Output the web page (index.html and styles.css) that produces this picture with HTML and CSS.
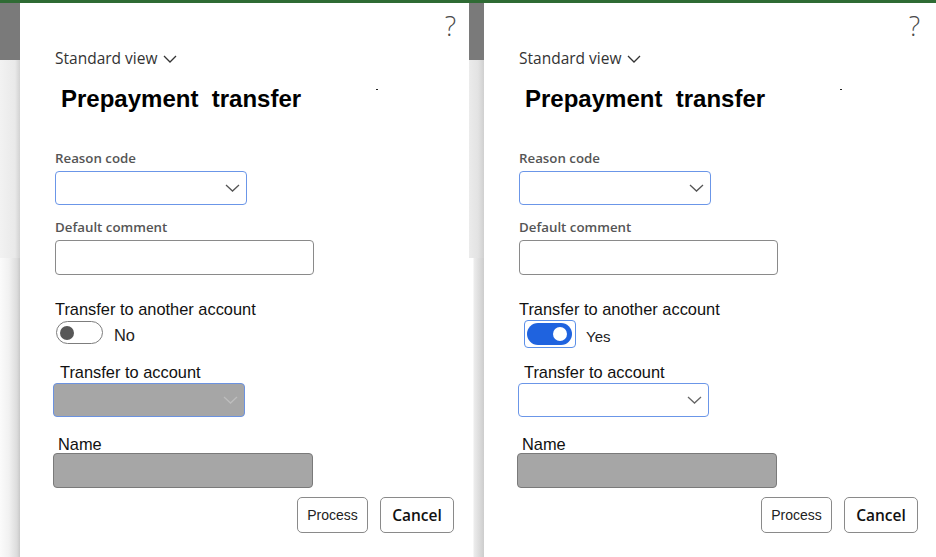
FILE: index.html
```html
<!DOCTYPE html>
<html lang="en">
<head>
<meta charset="utf-8">
<title>Prepayment transfer</title>
<link rel="stylesheet" href="styles.css">
</head>
<body>
<div class="page">
  <div class="edge edge-left"><div class="edge-top"></div><div class="edge-mid-band"></div><div class="edge-low"></div></div>

  <section class="dialog">
    <div class="content">
      <div class="help-row"><span class="help">?</span></div>
      <div class="view">Standard view
        <svg class="view-chev" width="14" height="8" viewBox="0 0 14 8"><path d="M1 1 L7 7 L13 1" fill="none" stroke="#333" stroke-width="1.3"/></svg>
      </div>
      <h1 class="title">Prepayment&nbsp; transfer<span class="tick"></span></h1>

      <label class="field-label first">Reason code</label>
      <div class="input select focus w192">
        <svg class="chev" width="15" height="8" viewBox="0 0 15 8"><path d="M1 1 L7.5 7 L14 1" fill="none" stroke="#555" stroke-width="1.3"/></svg>
      </div>

      <label class="field-label">Default comment</label>
      <div class="input w259"></div>

      <div class="plain-label transfer-q">Transfer to another account</div>
      <div class="toggle-row">
        <span class="toggle off"><span class="knob"></span></span>
        <span class="toggle-text no">No</span>
      </div>

      <div class="plain-label acct-label">Transfer to account</div>
      <div class="input select disabled focus w192 shift">
        <svg class="chev" width="15" height="8" viewBox="0 0 15 8"><path d="M1 1 L7.5 7 L14 1" fill="none" stroke="#bdbdbd" stroke-width="1.3"/></svg>
      </div>

      <div class="plain-label name-label">Name</div>
      <div class="input disabled w260 shift name-input"></div>

      <div class="actions">
        <button class="btn process">Process</button>
        <button class="btn cancel">Cancel</button>
      </div>
    </div>
  </section>

  <div class="edge edge-mid"><div class="edge-top"></div><div class="edge-mid-band"></div><div class="edge-low split"></div></div>

  <section class="dialog">
    <div class="content">
      <div class="help-row"><span class="help">?</span></div>
      <div class="view">Standard view
        <svg class="view-chev" width="14" height="8" viewBox="0 0 14 8"><path d="M1 1 L7 7 L13 1" fill="none" stroke="#333" stroke-width="1.3"/></svg>
      </div>
      <h1 class="title">Prepayment&nbsp; transfer<span class="tick"></span></h1>

      <label class="field-label first">Reason code</label>
      <div class="input select focus w192">
        <svg class="chev" width="15" height="8" viewBox="0 0 15 8"><path d="M1 1 L7.5 7 L14 1" fill="none" stroke="#555" stroke-width="1.3"/></svg>
      </div>

      <label class="field-label">Default comment</label>
      <div class="input w259"></div>

      <div class="plain-label transfer-q">Transfer to another account</div>
      <div class="toggle-row">
        <span class="toggle-ring"><span class="toggle on"><span class="knob"></span></span></span>
        <span class="toggle-text yes">Yes</span>
      </div>

      <div class="plain-label acct-label">Transfer to account</div>
      <div class="input select focus w191 shift1">
        <svg class="chev" width="15" height="8" viewBox="0 0 15 8"><path d="M1 1 L7.5 7 L14 1" fill="none" stroke="#666" stroke-width="1.3"/></svg>
      </div>

      <div class="plain-label name-label">Name</div>
      <div class="input disabled w260 shift name-input"></div>

      <div class="actions">
        <button class="btn process">Process</button>
        <button class="btn cancel">Cancel</button>
      </div>
    </div>
  </section>
</div>
</body>
</html>
```

FILE: styles.css
```css
* { box-sizing: border-box; }

html, body {
  margin: 0;
  padding: 0;
  background: #ffffff;
}

body {
  width: 936px;
  height: 557px;
  overflow: hidden;
  font-family: "Liberation Sans", Arial, sans-serif;
  color: #111;
}

.page {
  display: grid;
  grid-template-columns: 20px 449px 15px 452px;
  height: 557px;
  border-top: 3px solid #2f6b34;
}

/* background strips between the dialogs */
.edge {
  display: flex;
  flex-direction: column;
}
.edge-top {
  height: 57px;
  background: #7a7a7a;
}
.edge-mid-band {
  height: 198px;
  background: linear-gradient(to right, #f2f2f2, #e9e9e9 75%, #d2d2d2);
}
.edge-low {
  flex: 1;
  background: linear-gradient(to right, #fbfbfb, #f1f1f1 45%, #dcdcdc 85%, #c8c8c8);
}
.edge-mid .edge-mid-band {
  background: linear-gradient(to right, #ebebeb, #e3e3e3 60%, #d0d0d0);
}
.edge-low.split {
  background: linear-gradient(to right, #ffffff 0, #ffffff 4px, #ececec 5px, #e0e0e0 60%, #cdcdcd);
}

.dialog {
  background: #ffffff;
  padding-left: 35px;
}

.content {
  width: 400px;
  display: flex;
  flex-direction: column;
  align-items: flex-start;
}

.help-row {
  align-self: stretch;
  display: flex;
  justify-content: flex-end;
  margin-top: 8px;
  height: 30px;
}
.help {
  font-family: "Open Sans", sans-serif;
  font-weight: 300;
  font-size: 27px;
  line-height: 30px;
  color: #4a4a4a;
  margin-right: -1px;
}

.view {
  margin-top: 7px;
  font-family: "Open Sans", sans-serif;
  font-size: 15.5px;
  line-height: 20px;
  color: #333;
  display: flex;
  align-items: center;
  gap: 6px;
}
.view-chev { margin-top: 1px; }

.title {
  margin: 17px 0 0 6px;
  font-family: "Liberation Sans", Arial, sans-serif;
  font-weight: bold;
  font-size: 24px;
  line-height: 28px;
  color: #000;
  display: flex;
  align-items: flex-start;
}
.tick {
  display: block;
  width: 2px;
  height: 1px;
  background: #222;
  margin: 4px 0 0 75px;
}

.field-label {
  display: block;
  margin-top: 13px;
  font-family: "Open Sans", sans-serif;
  font-weight: 600;
  font-size: 13.3px;
  line-height: 18px;
  color: #555;
}
.field-label.first { margin-top: 36px; }

.input {
  margin-top: 4px;
  height: 35px;
  border: 1px solid #8a8a8a;
  border-radius: 4px;
  background: #fff;
  display: flex;
  align-items: center;
  justify-content: flex-end;
  padding-right: 6px;
}
.input.select { height: 34px; }
.input.focus { border-color: #6b96e8; }
.input.disabled { background: #a6a6a6; border-color: #7a7a7a; }
.input.disabled.focus { border-color: #6b92e0; }

.w191 { width: 191px; }
.w192 { width: 192px; }
.w259 { width: 259px; }
.w260 { width: 260px; }
.shift { margin-left: -2px; }
.shift1 { margin-left: -1px; }

.plain-label {
  font-family: "Liberation Sans", Arial, sans-serif;
  font-size: 16.4px;
  line-height: 20px;
  color: #111;
}
.transfer-q { margin-top: 24px; }
.acct-label { margin-top: 14px; margin-left: 5px; }
.acct-label + .input { margin-top: 1px; }
.name-label { margin-top: 17px; margin-left: 3px; }
.name-input { margin-top: -1px; }

.toggle-row {
  margin-top: 1px;
  height: 28px;
  display: flex;
  align-items: flex-start;
}

.toggle {
  display: flex;
  align-items: center;
  border-radius: 12px;
}
.toggle.off {
  margin-top: 1px;
  margin-left: 1px;
  width: 47px;
  height: 23px;
  border: 1.5px solid #7d7d7d;
  padding-left: 3px;
}
.toggle.off .knob {
  width: 14px;
  height: 14px;
  border-radius: 50%;
  background: #575757;
}

.toggle-ring {
  margin-left: 5px;
  width: 52px;
  height: 28px;
  border: 1.5px solid #5b8fe8;
  border-radius: 4px;
  padding: 1.5px 2px;
  display: flex;
}
.toggle.on {
  width: 45px;
  height: 22px;
  background: #1f63df;
  justify-content: flex-end;
  padding-right: 5px;
}
.toggle.on .knob {
  width: 14px;
  height: 14px;
  border-radius: 50%;
  background: #ffffff;
}

.toggle-text {
  font-family: "Liberation Sans", Arial, sans-serif;
  font-size: 16.4px;
  line-height: 20px;
  color: #222;
}
.toggle-text.no { margin: 5px 0 0 11px; }
.toggle-text.yes {
  margin: 7px 0 0 10px;
  font-size: 15px;
  white-space: nowrap;
}

.actions {
  align-self: stretch;
  display: flex;
  justify-content: flex-end;
  gap: 12px;
  margin-top: 9px;
  padding-right: 1px;
}
.btn {
  height: 36px;
  border: 1px solid #8a8a8a;
  border-radius: 5px;
  background: #fff;
  font-family: "Liberation Sans", Arial, sans-serif;
  color: #222;
  padding: 0;
  margin: 0;
}
.btn.process { width: 71px; font-size: 14px; }
.btn.cancel {
  width: 74px;
  font-family: "Open Sans", sans-serif;
  font-size: 15.5px;
  font-weight: 600;
  color: #111;
}
```
